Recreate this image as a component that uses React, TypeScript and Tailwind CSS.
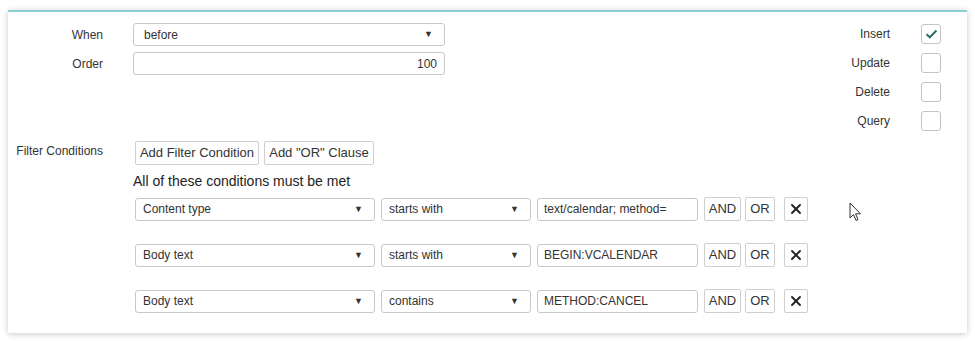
import { X } from "lucide-react";

const Caret = () => <span className="text-[9px] leading-none text-[#333]">▼</span>;

const SelectBox = ({ value, className }: { value: string; className: string }) => (
  <div
    className={`flex h-[23px] items-center justify-between rounded-[3px] border border-[#c8c8c8] bg-white pl-[7px] pr-[11px] text-[12px] text-[#333] ${className}`}
  >
    <span>{value}</span>
    <Caret />
  </div>
);

const Check = ({ checked }: { checked?: boolean }) => (
  <div className="flex h-[20px] w-[20px] items-center justify-center rounded-[3px] border border-[#c4c4c4] bg-white">
    {checked && (
      <svg width="13" height="10" viewBox="0 0 13 10">
        <path d="M1.5 5.2 L4.8 8.3 L11.5 1.5" fill="none" stroke="#2f6f69" strokeWidth="2" />
      </svg>
    )}
  </div>
);

const SmallBtn = ({ children, className = "" }: { children: React.ReactNode; className?: string }) => (
  <div
    className={`flex h-[24px] items-center justify-center rounded-[2px] border border-[#cfcfcf] bg-white text-[13px] text-[#333] ${className}`}
  >
    {children}
  </div>
);

const conditions = [
  { field: "Content type", op: "starts with", value: "text/calendar; method=" },
  { field: "Body text", op: "starts with", value: "BEGIN:VCALENDAR" },
  { field: "Body text", op: "contains", value: "METHOD:CANCEL" },
];

const flags = [
  { label: "Insert", checked: true },
  { label: "Update" },
  { label: "Delete" },
  { label: "Query" },
];

export default function App() {
  return (
    <div
      className="relative h-[341px] w-[975px] bg-white pl-[8px] pt-[10px]"
      style={{ fontFamily: '"Liberation Sans", Arial, sans-serif' }}
    >
      <div className="h-[323px] w-[959px] border-t-2 border-[#8ccfd3] bg-white shadow-[0_1px_6px_rgba(0,0,0,0.22)]">
        {/* top section */}
        <div className="flex">
          <div className="flex flex-col gap-[6px] pt-[11px]">
            <div className="flex items-center">
              <div className="w-[95px] text-right text-[12px] text-[#333]">When</div>
              <SelectBox value="before" className="ml-[30px] w-[312px] pl-[10px]" />
            </div>
            <div className="flex items-center">
              <div className="w-[95px] text-right text-[12px] text-[#333]">Order</div>
              <div className="ml-[30px] flex h-[23px] w-[312px] items-center justify-end rounded-[3px] border border-[#c8c8c8] pr-[7px] text-[12px] text-[#333]">
                100
              </div>
            </div>
          </div>
          <div className="ml-auto mr-[26px] flex flex-col pt-[7px]">
            {flags.map((f) => (
              <div key={f.label} className="flex h-[29px] items-center">
                <span className="w-[80px] text-right text-[12px] text-[#333]">{f.label}</span>
                <div className="ml-[31px]">
                  <Check checked={f.checked} />
                </div>
              </div>
            ))}
          </div>
        </div>

        {/* filter conditions */}
        <div className="mt-[6px] flex">
          <div className="w-[95px] pt-[1px] text-right text-[12px] text-[#333]">Filter Conditions</div>
          <div className="ml-[30px] flex flex-col">
            <div className="ml-[2px] flex gap-[5px]">
              <SmallBtn className="w-[124px]">Add Filter Condition</SmallBtn>
              <SmallBtn className="w-[110px]">Add "OR" Clause</SmallBtn>
            </div>
            <div className="mt-[8px] text-[14px] leading-[17px] text-[#222]">All of these conditions must be met</div>
            <div className="mt-[7px] flex flex-col gap-[22px]">
              {conditions.map((c, i) => (
                <div key={i} className="ml-[2px] flex items-center">
                  <SelectBox value={c.field} className="w-[240px]" />
                  <SelectBox value={c.op} className="ml-[6px] w-[150px]" />
                  <div className="ml-[6px] flex h-[23px] w-[161px] items-center rounded-[3px] border border-[#c8c8c8] pl-[6px] text-[12px] text-[#333]">
                    {c.value}
                  </div>
                  <SmallBtn className="ml-[6px] w-[37px]">AND</SmallBtn>
                  <SmallBtn className="ml-[4px] w-[30px]">OR</SmallBtn>
                  <SmallBtn className="ml-[9px] w-[24px]">
                    <X size={16} strokeWidth={2.8} color="#222" />
                  </SmallBtn>
                </div>
              ))}
            </div>
          </div>
        </div>
      </div>

      {/* mouse pointer */}
      <svg className="absolute left-[849px] top-[202px]" width="14" height="21" viewBox="0 0 14 21">
        <path
          d="M1 1 L1 16 L4.5 12.5 L7 18.5 L9 17.6 L6.6 11.8 L11.5 11.8 Z"
          fill="#fff"
          stroke="#333"
          strokeWidth="1"
          strokeLinejoin="round"
        />
      </svg>
    </div>
  );
}
